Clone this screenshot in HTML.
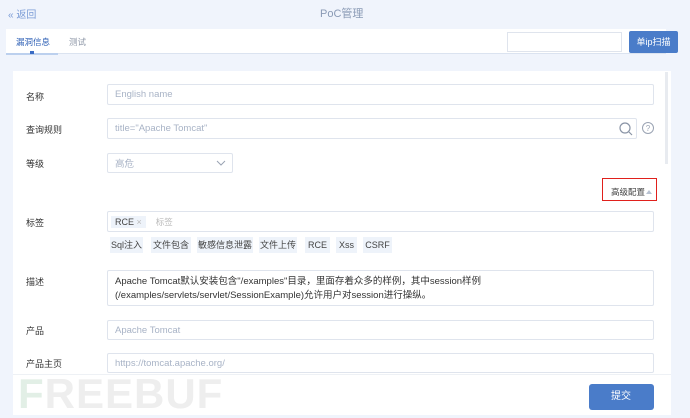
<!DOCTYPE html>
<html><head><meta charset="utf-8"><style>
*{box-sizing:border-box;margin:0;padding:0}
body{width:690px;height:415px;overflow:hidden;background:#f0f4fc;font-family:"Liberation Sans","Noto Sans CJK SC",sans-serif;position:relative;font-size:9px;color:#333}
.a{position:absolute}
.inp{position:absolute;border:1px solid #dfe4ed;border-radius:2px;background:#fff;color:#a8b3c6;font-size:9.5px;padding-left:7px;display:flex;align-items:center}
.lbl{position:absolute;left:26px;font-size:9px;color:#333}
.chip{position:absolute;top:237px;height:16px;background:#eef3fa;color:#444;font-size:9px;line-height:16px;text-align:center}
</style></head><body>
<div class="a" style="left:8px;top:6px;color:#7a9bd6;font-size:10px">« 返回</div>
<div class="a" style="left:320px;top:5px;color:#8a9ab5;font-size:11px">PoC管理</div>
<div class="a" style="left:6px;top:29px;width:660px;height:25px;background:#fff;border-bottom:1px solid #dbe3f0"></div>
<div class="a" style="left:16px;top:36px;color:#2d5fb5;font-size:8.5px">漏洞信息</div>
<div class="a" style="left:6px;top:53px;width:52px;height:2px;background:#bcd0ee"></div>
<div class="a" style="left:30px;top:51px;width:4px;height:3px;background:#3a6bc4"></div>
<div class="a" style="left:69px;top:36px;color:#8f98a8;font-size:8.5px">测试</div>
<div class="a" style="left:507px;top:32px;width:115px;height:20px;border:1px solid #dfe4ed;background:#fff"></div>
<div class="a" style="left:629px;top:31px;width:49px;height:22px;background:#4a7cc9;border-radius:2px;color:#fff;font-size:9px;line-height:22px;text-align:center">单ip扫描</div>
<div class="a" style="left:13px;top:71px;width:658px;height:344px;background:#fff"></div>
<div class="a" style="left:665px;top:72px;width:3px;height:92px;background:#e8ebf0"></div>
<div class="lbl" style="top:90px">名称</div>
<div class="inp" style="left:107px;top:84px;width:547px;height:21px">English name</div>
<div class="lbl" style="top:123px">查询规则</div>
<div class="inp" style="left:107px;top:118px;width:530px;height:21px">title="Apache Tomcat"</div>
<svg class="a" style="left:618px;top:121px" width="16" height="16" viewBox="0 0 16 16"><circle cx="7" cy="7" r="5" fill="none" stroke="#8a94a6" stroke-width="1.2"/><path d="M11 11l3 3" stroke="#8a94a6" stroke-width="1.2"/></svg>
<svg class="a" style="left:641px;top:121px" width="14" height="14" viewBox="0 0 14 14"><circle cx="7" cy="7" r="5.5" fill="none" stroke="#9aa3b3" stroke-width="1"/><text x="7" y="10" font-size="8" text-anchor="middle" fill="#9aa3b3" font-family="Liberation Sans">?</text></svg>
<div class="lbl" style="top:157px">等级</div>
<div class="inp" style="left:107px;top:153px;width:126px;height:20px">高危</div>
<svg class="a" style="left:216px;top:159px" width="10" height="8"><path d="M1 2l4 4 4-4" fill="none" stroke="#9aa3b3"/></svg>
<div class="a" style="left:602px;top:178px;width:55px;height:23px;border:1.5px solid #e0201c"></div>
<div class="a" style="left:611px;top:186px;color:#444;font-size:8.5px">高级配置</div>
<div class="a" style="left:646px;top:190px;width:0;height:0;border:3px solid transparent;border-bottom:4px solid #b8c2d2;border-top:0"></div>
<div class="lbl" style="top:216px">标签</div>
<div class="inp" style="left:107px;top:211px;width:547px;height:21px;padding-left:3px">
<span style="background:#eef3fa;color:#444;padding:1px 4px;font-size:9px">RCE <span style="color:#bbb">×</span></span><span style="margin-left:10px;color:#bbb;font-size:8.5px">标签</span></div>
<div class="chip" style="left:110px;width:33px">Sql注入</div>
<div class="chip" style="left:151px;width:40px">文件包含</div>
<div class="chip" style="left:197px;width:56px">敏感信息泄露</div>
<div class="chip" style="left:259px;width:38px">文件上传</div>
<div class="chip" style="left:305px;width:25px">RCE</div>
<div class="chip" style="left:336px;width:21px">Xss</div>
<div class="chip" style="left:363px;width:29px">CSRF</div>
<div class="lbl" style="top:275px">描述</div>
<div class="inp" style="left:107px;top:270px;width:547px;height:36px;color:#333;display:block;padding-top:4px;line-height:14px;font-size:9.5px">Apache Tomcat默认安装包含"/examples"目录，里面存着众多的样例，其中session样例<br>(/examples/servlets/servlet/SessionExample)允许用户对session进行操纵。</div>
<div class="lbl" style="top:324px">产品</div>
<div class="inp" style="left:107px;top:320px;width:547px;height:20px">Apache Tomcat</div>
<div class="lbl" style="top:357px">产品主页</div>
<div class="inp" style="left:107px;top:353px;width:547px;height:20px">https://tomcat.apache.org/</div>
<div class="a" style="left:13px;top:374px;width:658px;height:41px;background:#fff;border-top:1px solid #eef1f5"></div>
<div class="a" style="left:18px;top:370px;color:#eeeeee;font-size:42px;font-weight:bold;letter-spacing:1px"><span style="color:#e2efe6">F</span>REEBUF</div>
<div class="a" style="left:589px;top:384px;width:65px;height:26px;background:#4a7cc9;border-radius:3px;color:#fff;font-size:10px;line-height:26px;padding-left:22px">提交</div>
</body></html>
